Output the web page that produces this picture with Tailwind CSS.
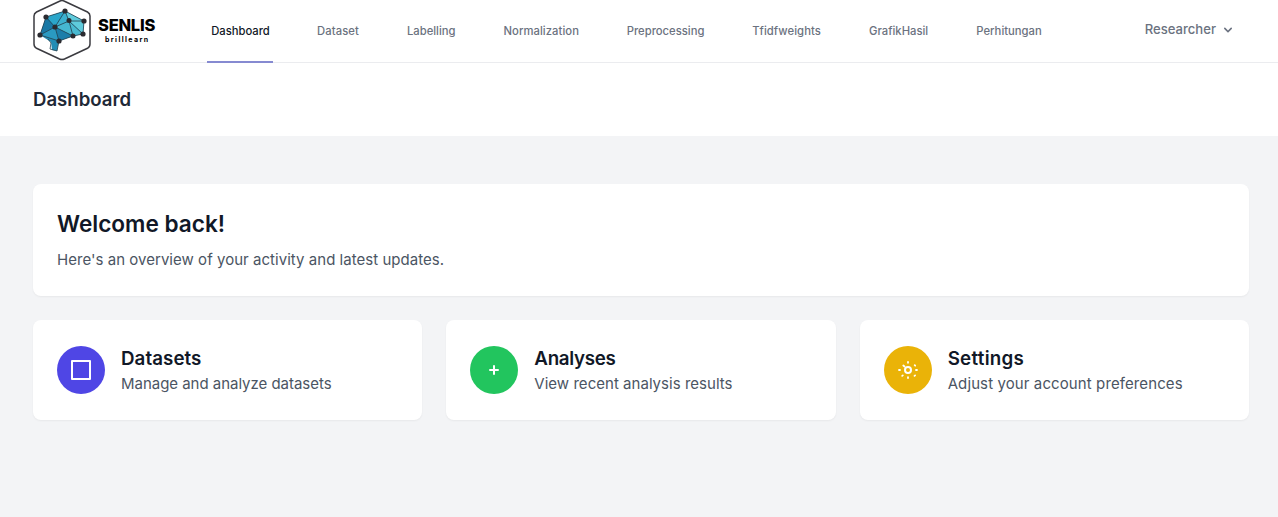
<!DOCTYPE html>
<html lang="en">
<head>
<meta charset="utf-8">
<title>Dashboard</title>
<script src="https://cdn.jsdelivr.net/npm/@tailwindcss/browser@4"></script>
</head>
<body class="h-[517px] overflow-hidden bg-gray-100 font-['Inter','Open_Sans',sans-serif] text-[#111827]">
<nav class="flex h-[63px] border-b border-[#ebecef] bg-white pl-[33px] pr-[42px]">
  <div class="flex w-[174px] items-start">
    <svg class="h-[61px] w-[58px] shrink-0" viewBox="0 0 58 61" fill="none">
      <path d="M26.500 1.200Q29 0 31.500 1.200L54.500 12Q57 13.300 57 16V44Q57 47 54.500 48.300L31.500 59Q29 60 26.500 59L3.500 48.300Q1 47 1 44V16Q1 13.300 3.500 12Z" stroke="#3b3b40" stroke-width="1.500"/>
      <path d="M13 17L32 11L51 21L50 34L40 36L26 41L24 51L19 50L18 42L7 35Z" fill="#238db5"/>
      <path d="M13 17L32 11L22 27Z" fill="#2ba6ca"/>
      <path d="M13 17L22 27L7 35Z" fill="#1978a5"/>
      <path d="M22 27L26 41L7 35Z" fill="#2a9ac2"/>
      <path d="M32 11L36 21L22 27Z" fill="#3cb1cf"/>
      <path d="M32 11L51 21L36 21ZM36 21L51 21L50 34Z" fill="#5fcbdc"/>
      <path d="M36 21L50 34L40 36Z" fill="#49bad1"/>
      <path d="M22 27L36 21L40 36Z" fill="#46b7d1"/>
      <path d="M22 27L40 36L26 41Z" fill="#1c7eaa"/>
      <path d="M13 17L32 11L51 21L50 34L40 36L26 41L7 35L13 17L22 27L32 11L36 21L51 21M7 35L22 27L26 41M22 27L36 21L40 36L22 27M36 21L50 34M15 39L18 43L17 49L24 51L26 41" stroke="#24404e" stroke-width=".8"/>
      <g fill="#2b2b30"><circle cx="13" cy="17" r="2.600"/><circle cx="32" cy="11" r="2.600"/><circle cx="36" cy="20.500" r="2.500"/><circle cx="51" cy="21" r="2.600"/><circle cx="22" cy="27" r="2.600"/><circle cx="7" cy="35" r="2.600"/><circle cx="40" cy="36" r="2.500"/><circle cx="50" cy="34" r="2.600"/><circle cx="26" cy="41" r="2.600"/></g>
    </svg>
    <div class="ml-[7px] mt-[17px] flex w-[60px] flex-col text-black">
      <span class="text-[16.500px] leading-[17px] font-extrabold tracking-[-0.250px]">SENLIS</span>
      <span class="ml-[7px] mt-px text-[7px] leading-[9px] font-bold tracking-[1.400px] whitespace-nowrap">brilllearn</span>
    </div>
  </div>
  <div class="flex gap-10 text-[11.250px] font-medium text-[#6b7280]">
    <a class="flex h-[63px] w-[66px] items-center justify-center border-b-2 border-[#868ad1] pt-px pl-px text-[#111827]">Dashboard</a>
    <a class="flex h-[62px] w-[50px] items-center justify-center tracking-[0.100px]">Dataset</a>
    <a class="flex h-[62px] w-[56.500px] items-center justify-center">Labelling</a>
    <a class="flex h-[62px] w-[83.500px] items-center justify-center tracking-[0.060px]">Normalization</a>
    <a class="flex h-[62px] w-[85.200px] items-center justify-center">Preprocessing</a>
    <a class="flex h-[62px] w-[76.700px] items-center justify-center tracking-[0.060px]">Tfidfweights</a>
    <a class="flex h-[62px] w-[67.500px] items-center justify-center">GrafikHasil</a>
    <a class="flex h-[62px] w-[73.300px] items-center justify-center">Perhitungan</a>
  </div>
  <button class="ml-auto flex h-[59px] items-center gap-1 text-[13.100px] font-medium text-[#6b7280]">
    <span>Researcher</span>
    <svg class="h-4 w-4" viewBox="0 0 20 20" fill="currentColor"><path fill-rule="evenodd" d="M5.293 7.293a1 1 0 011.414 0L10 10.586l3.293-3.293a1 1 0 111.414 1.414l-4 4a1 1 0 01-1.414 0l-4-4a1 1 0 010-1.414z" clip-rule="evenodd"/></svg>
  </button>
</nav>
<header class="flex h-[73px] items-center bg-white px-[33px]">
  <h1 class="text-[18.600px] font-semibold text-[#1f2937]">Dashboard</h1>
</header>
<main class="flex flex-col gap-6 pt-12 pr-[29px] pl-[33px]">
  <section class="h-28 rounded-lg bg-white p-6 shadow-[0_1px_2px_rgba(0,0,0,0.05)]">
    <h2 class="text-[22.600px] leading-8 font-semibold">Welcome back!</h2>
    <p class="mt-2 text-[15px] leading-6 tracking-[0.035px] text-[#4b5563]">Here's an overview of your activity and latest updates.</p>
  </section>
  <section class="grid grid-cols-3 gap-6">
    <article class="flex h-[100px] items-center rounded-lg bg-white px-6 shadow-[0_1px_2px_rgba(0,0,0,0.05)]">
      <div class="flex h-12 w-12 shrink-0 items-center justify-center rounded-full bg-[#4f46e5]">
        <svg class="h-6 w-6" viewBox="0 0 24 24" fill="none" stroke="white" stroke-width="2" stroke-linecap="round" stroke-linejoin="round"><path d="M3 3h18v18H3z"/></svg>
      </div>
      <div class="ml-4">
        <h3 class="h-7 text-[18.750px] leading-[30px] font-semibold tracking-[0.060px]">Datasets</h3>
        <p class="text-[15px] leading-6 tracking-[-0.030px] text-[#4b5563]">Manage and analyze datasets</p>
      </div>
    </article>
    <article class="flex h-[100px] items-center rounded-lg bg-white px-6 shadow-[0_1px_2px_rgba(0,0,0,0.05)]">
      <div class="flex h-12 w-12 shrink-0 items-center justify-center rounded-full bg-[#22c55e]">
        <svg class="h-6 w-6" viewBox="0 0 24 24" fill="none" stroke="white" stroke-width="2" stroke-linecap="round"><path d="M12 8v8M8 12h8"/></svg>
      </div>
      <div class="ml-4">
        <h3 class="h-7 text-[18.750px] leading-[30px] font-semibold tracking-[-0.300px]">Analyses</h3>
        <p class="text-[15px] leading-6 tracking-[0.030px] text-[#4b5563]">View recent analysis results</p>
      </div>
    </article>
    <article class="flex h-[100px] items-center rounded-lg bg-white px-6 shadow-[0_1px_2px_rgba(0,0,0,0.05)]">
      <div class="flex h-12 w-12 shrink-0 items-center justify-center rounded-full bg-[#eab308]">
        <svg class="h-6 w-6" viewBox="0 0 24 24" fill="none" stroke="white" stroke-width="2" stroke-linecap="round"><circle cx="12" cy="12" r="3"/><path stroke-width="1.800" d="M12 4v.8M12 19.200v.8M3 12h1M20 12h1M6.200 17.900l.6-.5M18.700 7.200l.5.5M7.300 7.500l1.200 1M18.500 17.900l.6-.5"/></svg>
      </div>
      <div class="ml-4">
        <h3 class="h-7 text-[18.750px] leading-[30px] font-semibold tracking-[0.260px]">Settings</h3>
        <p class="text-[15px] leading-6 tracking-[0.105px] text-[#4b5563]">Adjust your account preferences</p>
      </div>
    </article>
  </section>
</main>
</body>
</html>
